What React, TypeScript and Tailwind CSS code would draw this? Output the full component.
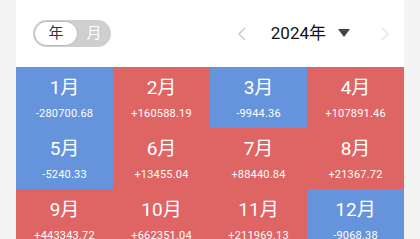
const months = [
  { m: '1月', v: '-280700.68' },
  { m: '2月', v: '+160588.19' },
  { m: '3月', v: '-9944.36' },
  { m: '4月', v: '+107891.46' },
  { m: '5月', v: '-5240.33' },
  { m: '6月', v: '+13455.04' },
  { m: '7月', v: '+88440.84' },
  { m: '8月', v: '+21367.72' },
  { m: '9月', v: '+443343.72' },
  { m: '10月', v: '+662351.04' },
  { m: '11月', v: '+211969.13' },
  { m: '12月', v: '-9068.38' },
]

export default function App() {
  return (
    <div className="h-[239px] w-[420px] overflow-hidden bg-[#f4f4f4] px-4 font-['Roboto','Noto_Sans_CJK_SC',sans-serif]">
      <div className="bg-white">
        <div className="flex h-[67px] items-center pl-[17px] pr-[14px]">
          {/* year / month toggle */}
          <div className="flex h-[27px] w-[78px] items-center rounded-full bg-[#cfcfcf] p-px">
            <div className="flex h-full w-[44px] items-center justify-center rounded-full border border-[#bbb] bg-white text-[15px] text-[#333]">
              年
            </div>
            <div className="flex flex-1 items-center justify-center text-[15px] text-white">月</div>
          </div>

          <div className="ml-auto flex items-center">
            <svg width="10" height="16" viewBox="0 0 10 16" className="mr-[24px]">
              <path d="M8 2L2 8l6 6" fill="none" stroke="#ccc" strokeWidth="1.5" />
            </svg>
            <span className="text-[17px] text-[#111]">2024年</span>
            <svg width="12" height="9" viewBox="0 0 12 9" className="ml-[12px]">
              <path d="M0 0h12L6 8z" fill="#444" />
            </svg>
            <svg width="10" height="16" viewBox="0 0 10 16" className="ml-[30px]">
              <path d="M2 2l6 6-6 6" fill="none" stroke="#e6e6e6" strokeWidth="1.5" />
            </svg>
          </div>
        </div>

        <div className="grid grid-cols-4">
          {months.map((x) => (
            <div
              key={x.m}
              className={
                'flex h-[61px] flex-col items-center pt-[11px] text-white ' +
                (x.v.startsWith('-') ? 'bg-[#6594dc]' : 'bg-[#df6464]')
              }
            >
              <div className="text-[19px] leading-[20px]">{x.m}</div>
              <div className="mt-[9px] text-[11px] leading-[13px] tracking-[0.2px]">{x.v}</div>
            </div>
          ))}
        </div>
      </div>
    </div>
  )
}
